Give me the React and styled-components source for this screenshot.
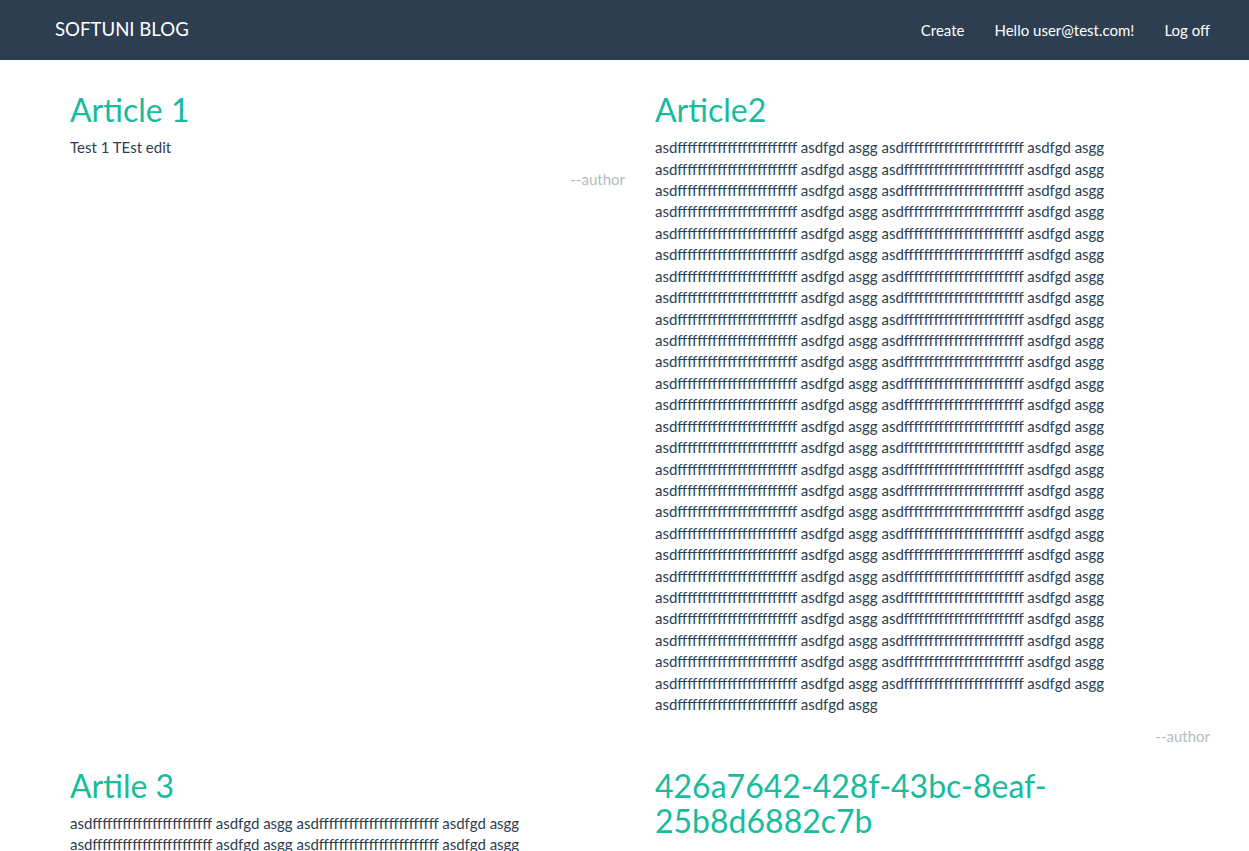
import React from "react";
import styled, { createGlobalStyle } from "styled-components";

const GlobalStyle = createGlobalStyle`
  html, body {
    margin: 0;
    padding: 0;
    background: #ffffff;
  }
  body {
    font-family: Lato, "Helvetica Neue", Helvetica, Arial, sans-serif;
    font-size: 15px;
    line-height: 1.42857143;
    color: #2c3e50;
  }
  * {
    box-sizing: border-box;
  }
`;

const Navbar = styled.nav`
  background: #2c3e50;
  height: 60px;
  margin-bottom: 12px;
`;

const Wrap = styled.div`
  width: 1170px;
  margin-left: 55px;
  display: flex;
  align-items: center;
  justify-content: space-between;
  height: 100%;
`;

const Brand = styled.a`
  color: #ffffff;
  font-size: 18.6px;
  line-height: 21px;
  text-decoration: none;
  margin-top: -2px;
`;

const NavList = styled.ul`
  list-style: none;
  margin: 0;
  padding: 0;
  display: flex;
`;

const NavLink = styled.a`
  display: block;
  color: #ffffff;
  padding: 19.5px 15px;
  line-height: 21px;
  text-decoration: none;
`;

const Row = styled.div`
  width: 1170px;
  margin-left: 55px;
  display: grid;
  grid-template-columns: 585px 585px;
`;

const Article = styled.article`
  padding: 0 15px;
  min-width: 0;
`;

const Title = styled.h2`
  font-size: 32px;
  font-weight: 400;
  line-height: 1.1;
  margin: 20px 0 10px;
  color: #18bc9c;
  word-wrap: break-word;
`;

const Body = styled.p`
  margin: 0 0 10.5px;
`;

const Author = styled.div`
  text-align: right;
  color: #b4bcc2;
`;

const chunk = "asdf" + "f".repeat(23) + " asdfgd asgg";
const longText = Array(53).fill(chunk).join(" ");

const articles = [
  { title: "Article 1", body: "Test 1 TEst edit" },
  { title: "Article2", body: longText },
  { title: "Artile 3", body: longText },
  { title: "426a7642-428f-43bc-8eaf-25b8d6882c7b", body: longText },
];

export default function App() {
  return (
    <>
      <GlobalStyle />
      <Navbar>
        <Wrap>
          <Brand href="#">SOFTUNI BLOG</Brand>
          <NavList>
            <li><NavLink href="#">Create</NavLink></li>
            <li><NavLink href="#">Hello user@test.com!</NavLink></li>
            <li><NavLink href="#">Log off</NavLink></li>
          </NavList>
        </Wrap>
      </Navbar>
      <Row>
        {articles.map((a) => (
          <Article key={a.title}>
            <Title>{a.title}</Title>
            <Body>{a.body}</Body>
            <Author>--author</Author>
          </Article>
        ))}
      </Row>
    </>
  );
}
